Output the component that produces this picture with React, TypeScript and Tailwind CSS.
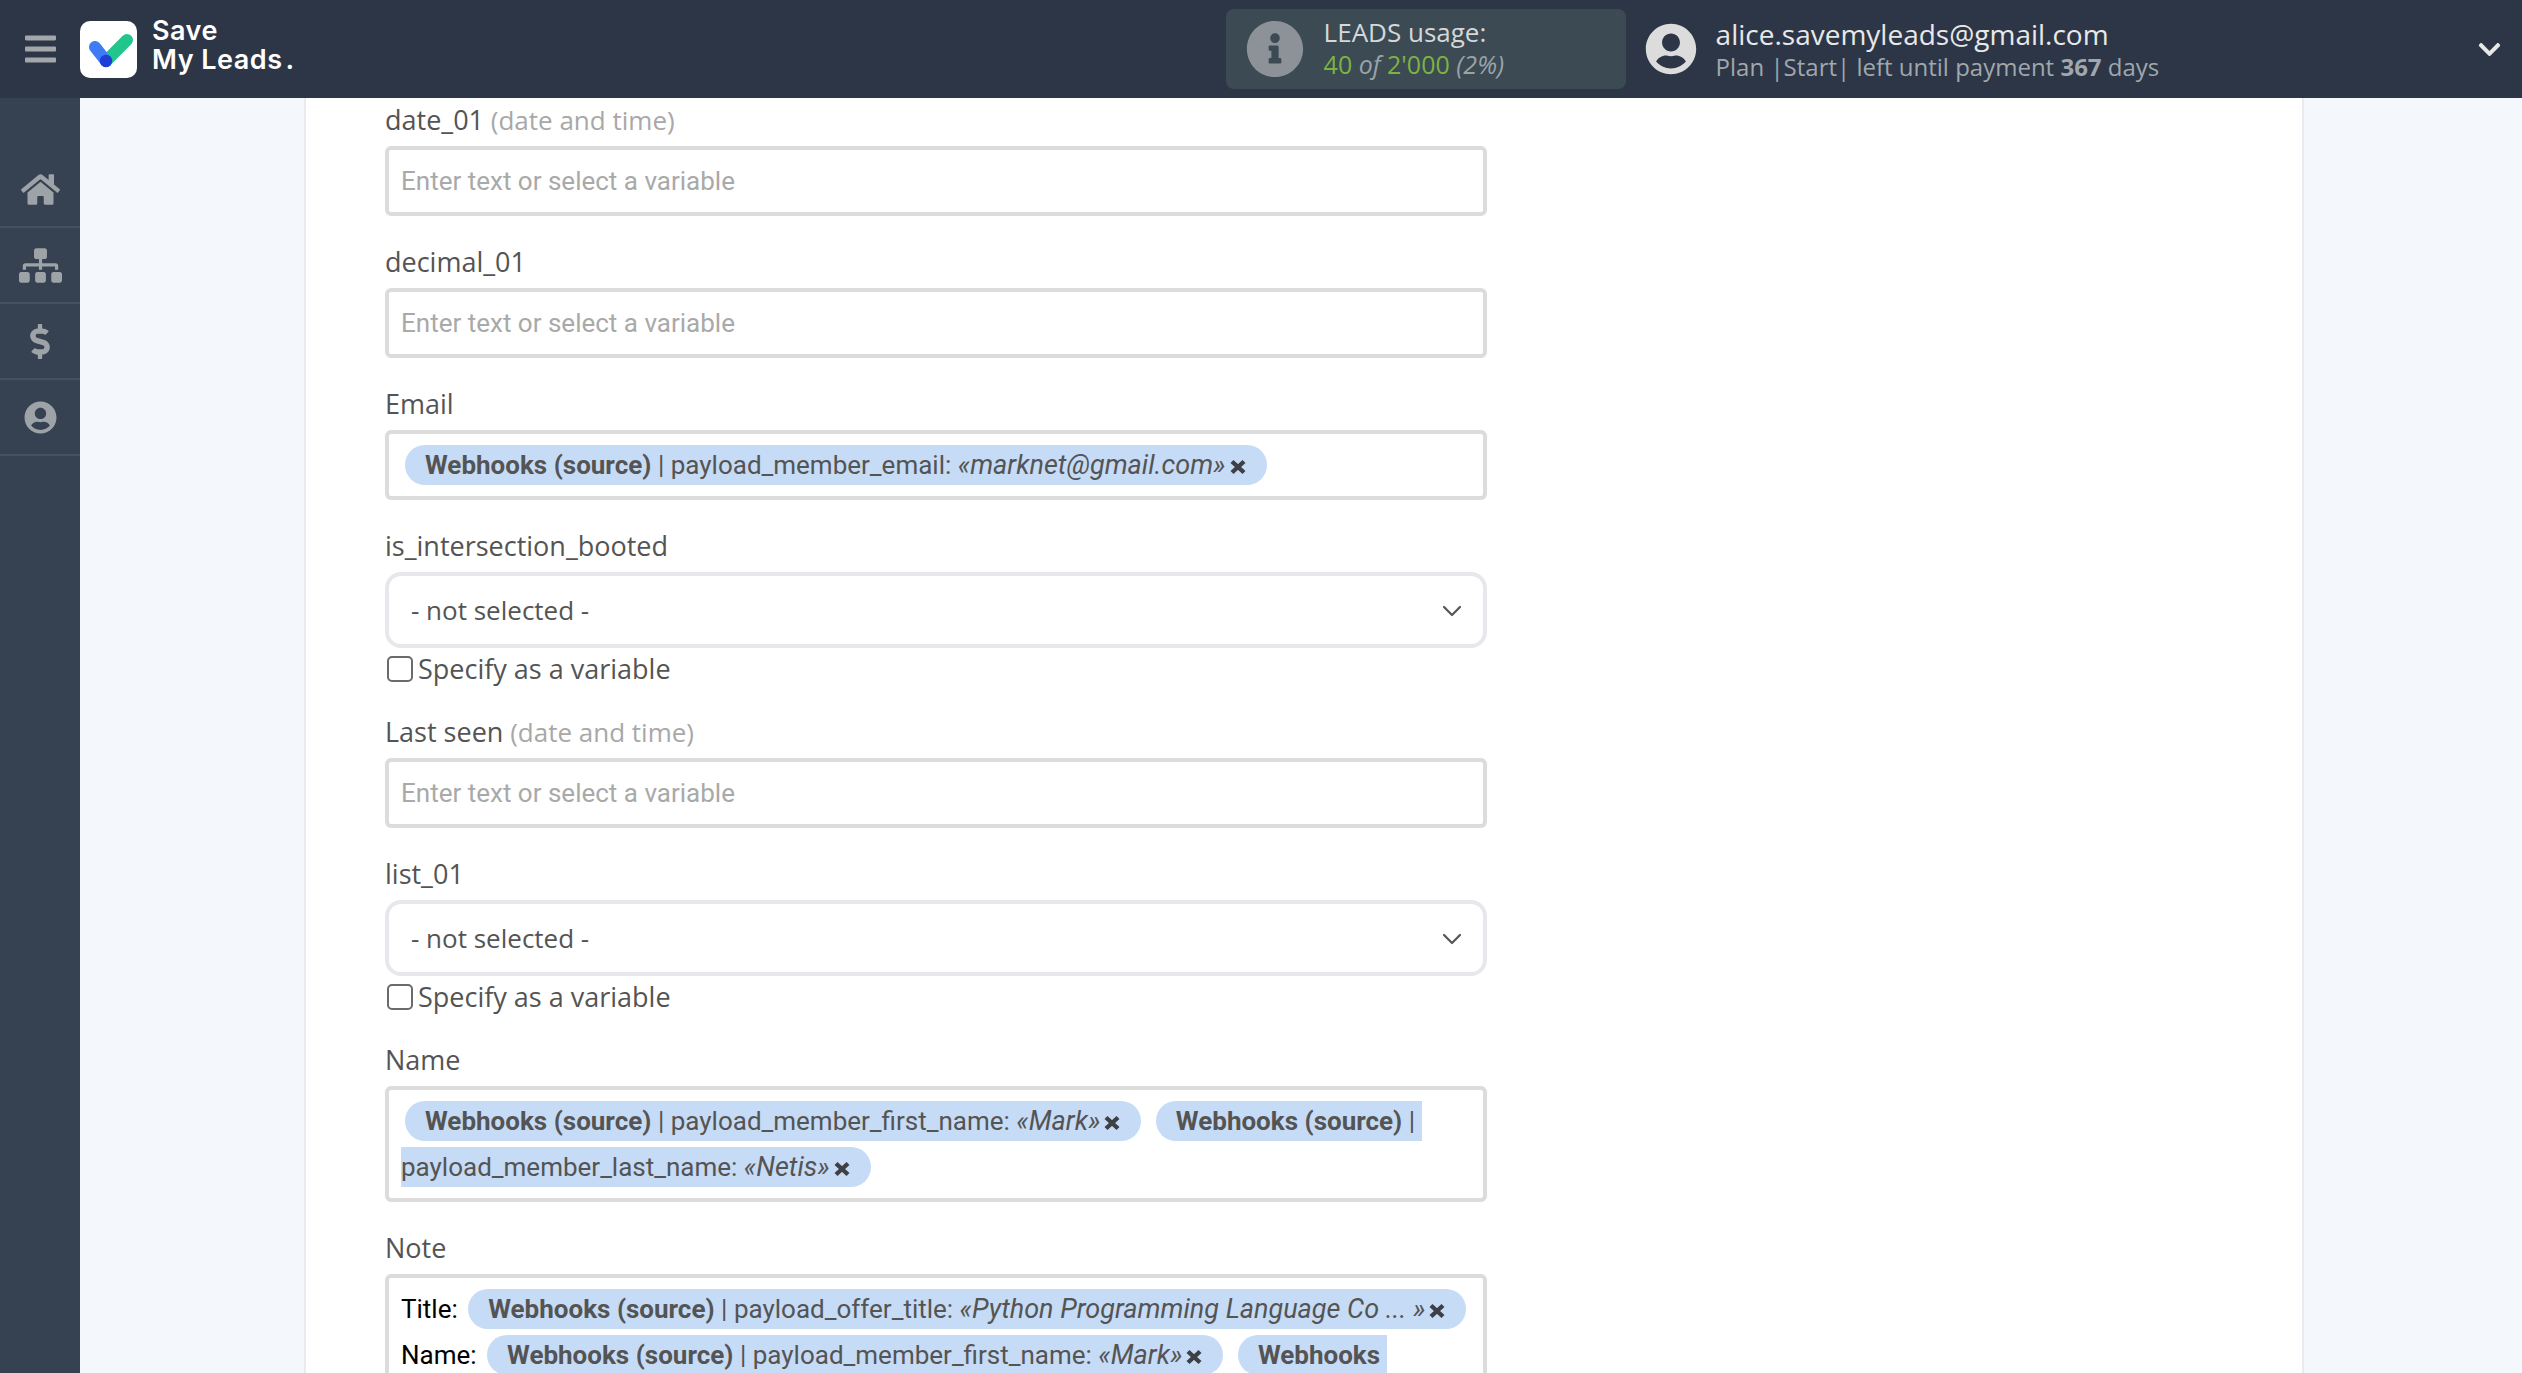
import { ChevronDown } from 'lucide-react'
import { FaBars, FaChevronDown, FaDollarSign, FaHome, FaInfoCircle, FaSitemap, FaUserCircle } from 'react-icons/fa'

function Label({ name, hint }: { name: string; hint?: string }) {
  return (
    <div className="h-[36px] mb-[8px] text-[27px] leading-[36px] text-[#545454] font-['Open_Sans',sans-serif] font-medium">
      {name}
      {hint && <span className="text-[26px] font-normal text-[#a8a8a8]"> {hint}</span>}
    </div>
  )
}

function TextField({ name, hint }: { name: string; hint?: string }) {
  return (
    <div className="mb-[28px]">
      <Label name={name} hint={hint} />
      <input
        placeholder="Enter text or select a variable"
        className="block w-full h-[70px] px-[12px] border-[4px] border-[#dcdcdc] rounded-[6px] bg-white text-[26px] font-['Roboto',sans-serif] placeholder:text-[#a9a9a9] outline-none"
      />
    </div>
  )
}

function SelectField({ name }: { name: string }) {
  return (
    <div className="mb-[28px]">
      <Label name={name} />
      <div className="flex items-center justify-between h-[76px] pl-[22px] pr-[15px] border-[4px] border-[#e6e8ec] rounded-[16px] bg-white text-[26px] text-[#545454] font-['Open_Sans',sans-serif]">
        <span>- not selected -</span>
        <ChevronDown size={32} strokeWidth={1.6} className="mt-[2px] text-[#555555]" />
      </div>
      <label className="flex items-center h-[38px] pt-[4px] text-[27px] text-[#545454] font-['Open_Sans',sans-serif] font-medium">
        <span className="block w-[26px] h-[26px] ml-[2px] mr-[5px] border-[2px] border-[#6b6b6b] rounded-[5px] bg-white" />
        Specify as a variable
      </label>
    </div>
  )
}

function Chip({ field, value }: { field: string; value: string }) {
  return (
    <span className="mx-[4px] py-[5px] px-[20px] rounded-[20px] bg-[#c6dbf5] text-[#545454]">
      {/* the trailing space keeps its background where the chip wraps */}
      <b className="font-bold">
        <span className="pr-[6.5px]">Webhooks</span>
        <wbr />
        <span className="pr-[6.5px]">(source)</span>
      </b>
      <span className="pr-[6.5px]">|</span>
      <wbr />
      {field}: <i className="text-[27px]">{value}</i>
      <svg viewBox="0 0 18 16" className="inline-block w-[18px] h-[16px] ml-[3px] align-[-1px]">
        <path d="M3 2.5 L15 13.5 M15 2.5 L3 13.5" stroke="#3f3f46" strokeWidth="4.4" fill="none" />
      </svg>
    </span>
  )
}

function TagBox({ children }: { children: React.ReactNode }) {
  return (
    <div className="px-[12px] pt-[8px] pb-[8px] border-[4px] border-[#dcdcdc] rounded-[6px] bg-white text-[26px] leading-[46px] text-black font-['Roboto',sans-serif]">
      {children}
    </div>
  )
}

function Logo() {
  return (
    <div className="flex items-center">
      <div className="w-[57px] h-[57px] rounded-[10px] bg-white">
        <svg viewBox="0 0 57 57" className="w-[57px] h-[57px]">
          <path d="M26 40 L47 19" stroke="#22c58b" strokeWidth="12" strokeLinecap="round" fill="none" />
          <path d="M15 26 L26 40" stroke="#3f7bf7" strokeWidth="12" strokeLinecap="round" fill="none" />
          <circle cx="26" cy="40" r="6.2" fill="#1d3fd6" />
        </svg>
      </div>
      <div className="ml-[15px] -mt-[8px] text-[27px] leading-[29px] font-semibold tracking-[0.5px] text-white font-['Inter',sans-serif]">
        <div>Save</div>
        <div>
          My Leads<span className="ml-[3px]">.</span>
        </div>
      </div>
    </div>
  )
}

function Header() {
  return (
    <header className="relative flex items-center h-[98px] shrink-0 bg-[#2d3646] font-['Open_Sans',sans-serif]">
      <div className="flex justify-center w-[80px]">
        <FaBars className="w-[31px] h-[36px] text-[#a3a6aa]" />
      </div>
      <Logo />
      <div className="flex items-center shrink-0 h-[80px] w-[400px] ml-[931px] pl-[20px] rounded-[8px] bg-[#3c4a54]">
        <FaInfoCircle className="w-[58px] h-[58px] text-[#8c9297]" />
        <div className="ml-[20px] -mt-[3px]">
          <div className="text-[26px] leading-[32px] text-[#d5d8da]">LEADS usage:</div>
          <div className="text-[25px] leading-[32px] italic text-[#9aa3a8]">
            <span className="not-italic text-[#7cb342]">40</span> of <span className="not-italic text-[#7cb342]">2'000</span> (2%)
          </div>
        </div>
      </div>
      <FaUserCircle className="w-[52px] h-[52px] ml-[19px] text-[#dcdcdc]" />
      <div className="ml-[19px] -mt-[3px]">
        <div className="text-[28px] leading-[38px] text-[#e8e8e8]">alice.savemyleads@gmail.com</div>
        <div className="text-[24px] leading-[28px] text-[#a0a7ae]">
          Plan |Start| left until payment <b className="font-bold">367</b> days
        </div>
      </div>
      <FaChevronDown className="w-[25px] h-[25px] ml-auto mr-[20px] text-[#e8e8e8]" />
    </header>
  )
}

function Sidebar() {
  return (
    <aside className="w-[80px] shrink-0 pt-[54px] bg-[#364152]">
      <div className="flex items-center justify-center h-[76px] border-b-[2px] border-[#46505f]">
        <FaHome className="w-[39px] h-[35px] text-[#9ea3a8]" />
      </div>
      <div className="flex items-center justify-center h-[76px] border-b-[2px] border-[#46505f]">
        <FaSitemap className="w-[43px] h-[35px] text-[#9ea3a8]" />
      </div>
      <div className="flex items-center justify-center h-[76px] border-b-[2px] border-[#46505f]">
        <FaDollarSign className="w-[22px] h-[35px] text-[#9ea3a8]" />
      </div>
      <div className="flex items-center justify-center h-[76px] border-b-[2px] border-[#46505f]">
        <FaUserCircle className="w-[33px] h-[33px] text-[#9ea3a8]" />
      </div>
    </aside>
  )
}

export default function App() {
  return (
    <div className="flex flex-col h-screen overflow-hidden bg-[#f4f7fc]">
      <Header />
      <div className="flex flex-1 min-h-0">
        <Sidebar />
        <main className="flex-1 pl-[224px]">
          <div className="w-[2000px] h-full pl-[79px] pt-[4px] bg-white border-x-[2px] border-[#e8ecf0]">
            <div className="w-[1102px]">
              <TextField name="date_01" hint="(date and time)" />
              <TextField name="decimal_01" />
              <div className="mb-[28px]">
                <Label name="Email" />
                <TagBox>
                  <Chip field="payload_member_email" value="«marknet@gmail.com»" />
                </TagBox>
              </div>
              <SelectField name="is_intersection_booted" />
              <TextField name="Last seen" hint="(date and time)" />
              <SelectField name="list_01" />
              <div className="mb-[28px]">
                <Label name="Name" />
                <TagBox>
                  <Chip field="payload_member_first_name" value="«Mark»" />{' '}
                  <Chip field="payload_member_last_name" value="«Netis»" />
                </TagBox>
              </div>
              <div>
                <Label name="Note" />
                <TagBox>
                  Title: <Chip field="payload_offer_title" value="«Python Programming Language Co ... »" />{' '}
                  Name: <Chip field="payload_member_first_name" value="«Mark»" />{' '}
                  <Chip field="payload_member_last_name" value="«Netis»" />
                </TagBox>
              </div>
            </div>
          </div>
        </main>
      </div>
    </div>
  )
}
